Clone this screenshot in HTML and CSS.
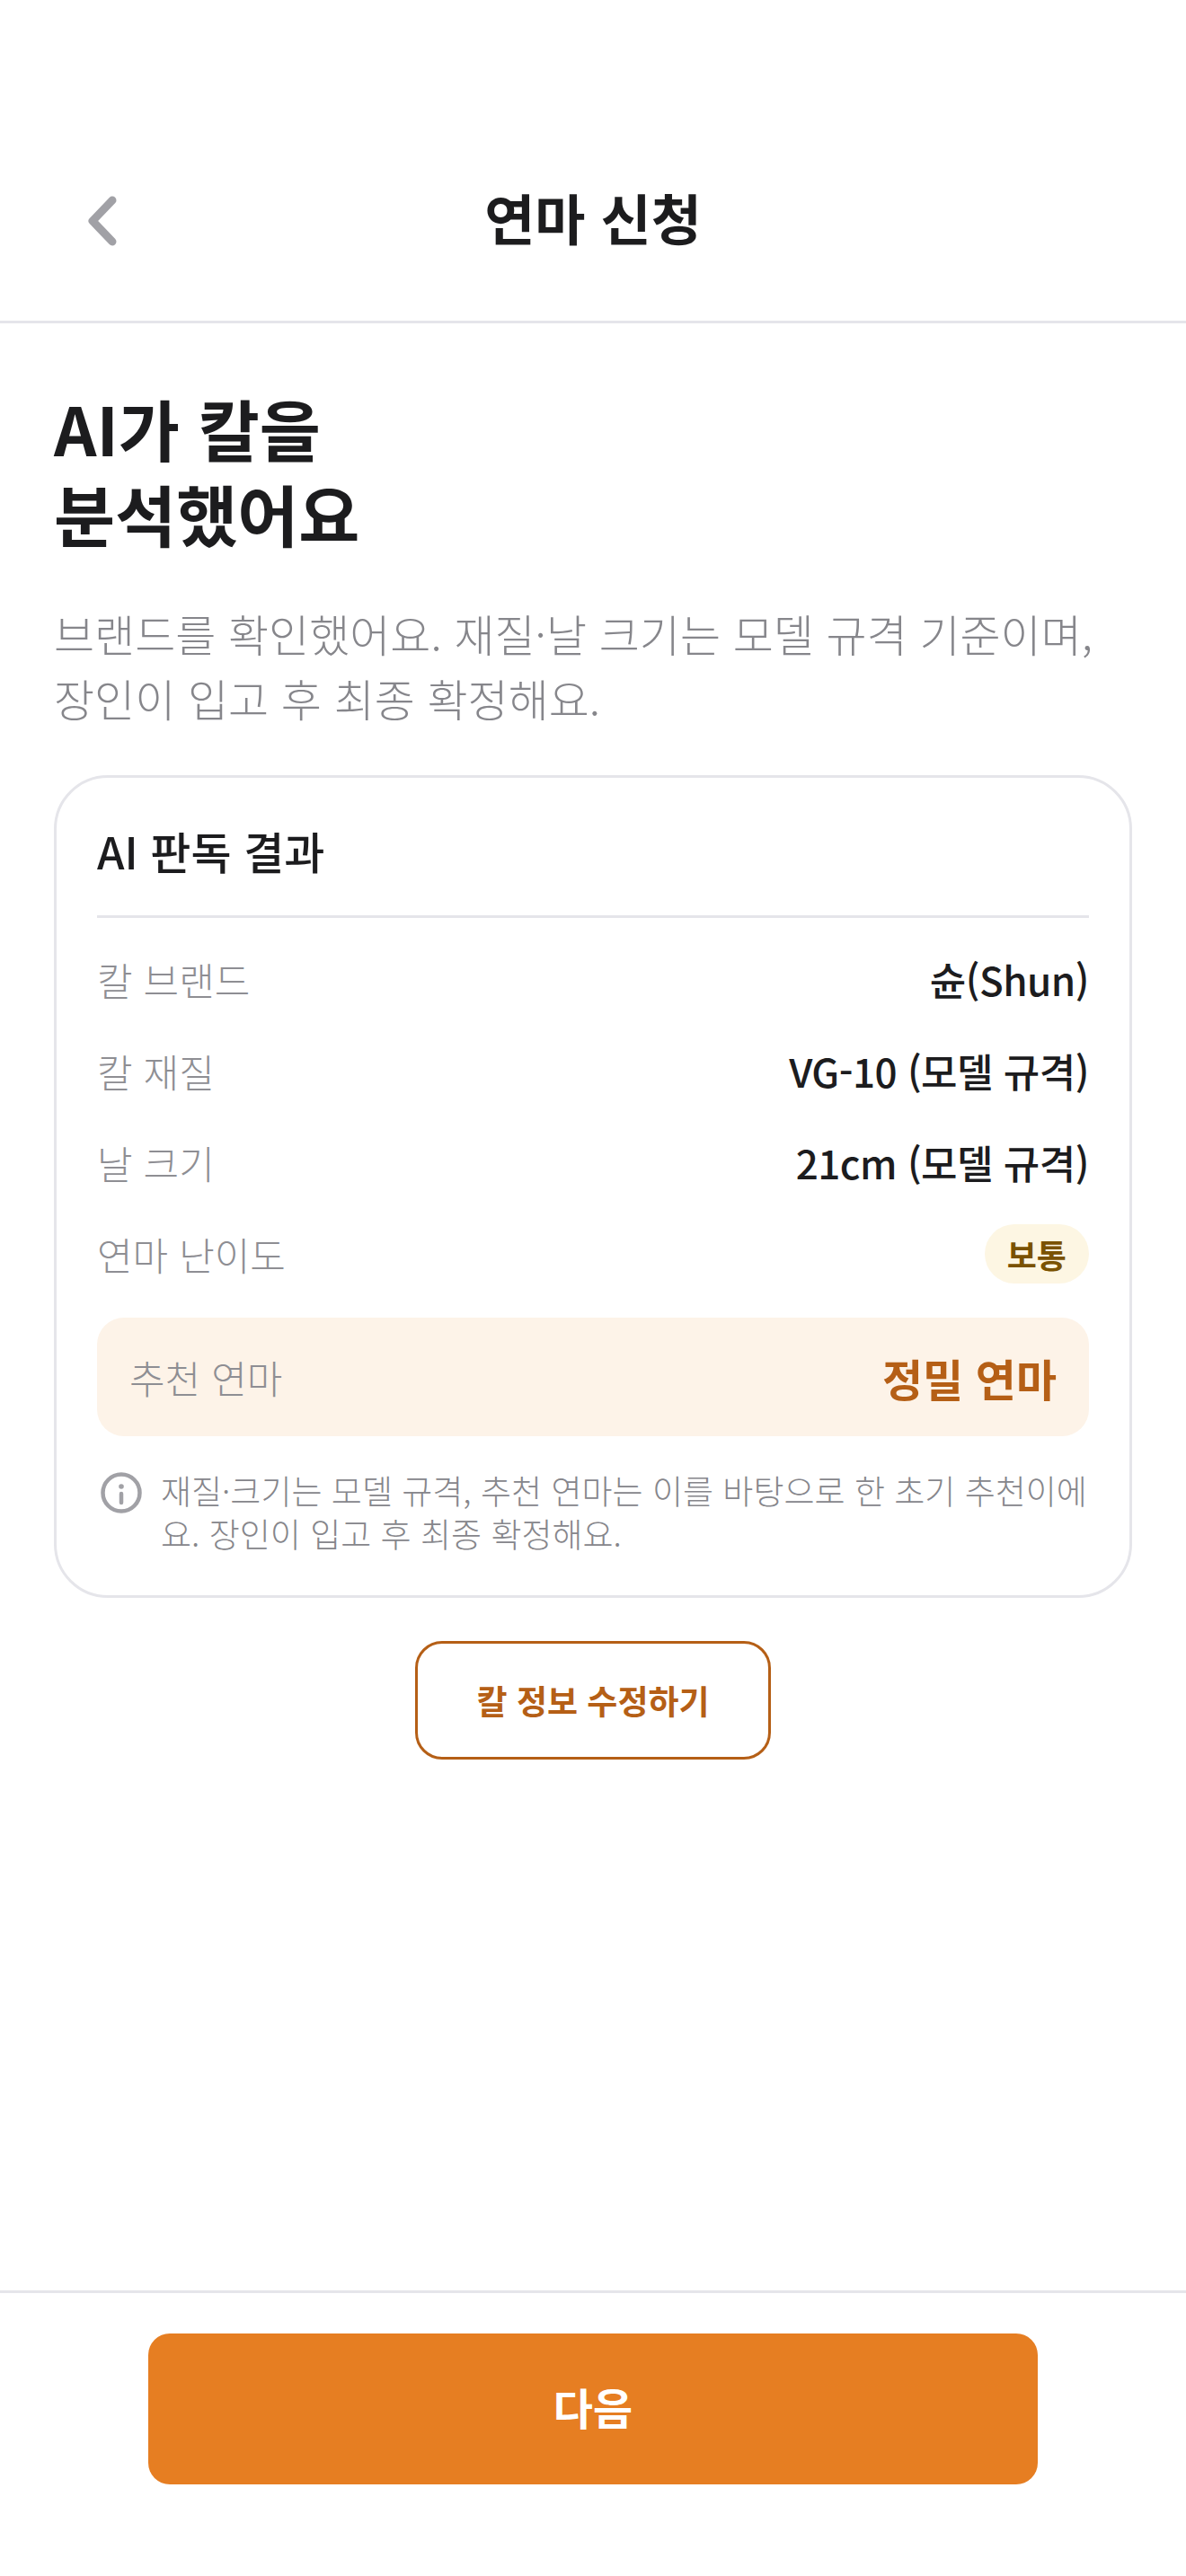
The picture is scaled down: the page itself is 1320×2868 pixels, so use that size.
FILE: index.html
```html
<!DOCTYPE html>
<html lang="ko">
<head>
<meta charset="utf-8">
<title>연마 신청</title>
<link rel="stylesheet" href="styles.css">
</head>
<body>

<div class="screen">
    <header class="topbar">
        <button class="back" aria-label="뒤로">
            <svg width="42" height="60" viewBox="0 0 42 60" fill="none">
                <path d="M35 9 L13 32 L35 55" stroke="#a1a1a6" stroke-width="9" stroke-linecap="round" stroke-linejoin="round"/>
            </svg>
        </button>
        <h2 class="topbar-title">연마 신청</h2>
    </header>

    <main class="content">
        <h1 class="headline">AI가 칼을<br>분석했어요</h1>
        <p class="lead">브랜드를 확인했어요. 재질·날 크기는 모델 규격 기준이며,<br>장인이 입고 후 최종 확정해요.</p>

        <section class="card">
            <h3 class="card-title">AI 판독 결과</h3>

            <div class="rows">
                <div class="row">
                    <span class="row-label">칼 브랜드</span>
                    <span class="row-value">슌(Shun)</span>
                </div>
                <div class="row">
                    <span class="row-label">칼 재질</span>
                    <span class="row-value">VG-10 (모델 규격)</span>
                </div>
                <div class="row">
                    <span class="row-label">날 크기</span>
                    <span class="row-value">21cm (모델 규격)</span>
                </div>
                <div class="row">
                    <span class="row-label">연마 난이도</span>
                    <span class="badge">보통</span>
                </div>
            </div>

            <div class="recommend">
                <span class="recommend-label">추천 연마</span>
                <span class="recommend-value">정밀 연마</span>
            </div>

            <div class="note">
                <svg class="note-icon" width="48" height="48" viewBox="0 0 48 48" fill="none">
                    <circle cx="24" cy="24" r="20.5" stroke="#a1a1a6" stroke-width="4.5"/>
                    <circle cx="24" cy="17" r="2.8" fill="#a1a1a6"/>
                    <path d="M24 25 V35" stroke="#a1a1a6" stroke-width="4.5" stroke-linecap="round"/>
                </svg>
                <p class="note-text">재질·크기는 모델 규격, 추천 연마는 이를 바탕으로 한 초기 추천이에요. 장인이 입고 후 최종 확정해요.</p>
            </div>
        </section>

        <div class="edit-wrap">
            <button class="edit-btn">칼 정보 수정하기</button>
        </div>
    </main>

    <footer class="bottombar">
        <button class="next-btn">다음</button>
    </footer>
</div>

</body>
</html>
```

FILE: styles.css
```css
* {
    box-sizing: border-box;
}

body {
    margin: 0;
    background-color: #fff;
    font-family: "Noto Sans CJK KR", "Noto Sans", sans-serif;
    color: #1c1c1e;
}

button {
    font-family: inherit;
    cursor: pointer;
}

.screen {
    width: 1320px;
    height: 2868px;
    display: flex;
    flex-direction: column;
    overflow: hidden;
}

.topbar {
    height: 360px;
    padding: 130px 90px 0;
    border-bottom: 3px solid #e5e5ea;
    display: flex;
    align-items: center;
}

.back {
    width: 42px;
    height: 60px;
    padding: 0;
    border: 0;
    background: none;
    display: flex;
}

.topbar-title {
    margin: 0;
    flex: 1;
    padding: 0 42px 4px 0;
    text-align: center;
    font-size: 61px;
    font-weight: 700;
    line-height: 80px;
}

.content {
    flex: 1;
    padding: 68px 60px 0;
}

.headline {
    margin: 0;
    font-size: 74px;
    font-weight: 700;
    line-height: 95px;
}

.lead {
    margin: 51px 0 0;
    font-size: 49px;
    font-weight: 300;
    line-height: 72px;
    color: #86868b;
}

.card {
    margin-top: 50px;
    padding: 45px 45px 45px;
    border: 3px solid #e5e5ea;
    border-radius: 60px;
}

.card-title {
    margin: 0;
    padding-bottom: 36px;
    border-bottom: 3px solid #e5e5ea;
    font-size: 49px;
    font-weight: 500;
    line-height: 72px;
}

.rows {
    padding-top: 17px;
    display: flex;
    flex-direction: column;
}

.row {
    height: 102px;
    display: flex;
    align-items: center;
    justify-content: space-between;
}

.row-label {
    font-size: 43px;
    font-weight: 300;
    color: #8e8e93;
}

.row-value {
    font-size: 44px;
    font-weight: 500;
    letter-spacing: -0.5px;
}

.badge {
    padding: 6px 25px;
    border-radius: 40px;
    background-color: #fdf6e3;
    color: #7a5200;
    font-size: 36px;
    font-weight: 700;
    line-height: 54px;
}

.recommend {
    margin-top: 20px;
    height: 132px;
    padding: 0 36px;
    border-radius: 30px;
    background-color: #fdf3e8;
    display: flex;
    align-items: center;
    justify-content: space-between;
}

.recommend-label {
    font-size: 43px;
    font-weight: 300;
    color: #8e8e93;
}

.recommend-value {
    font-size: 49px;
    font-weight: 700;
    color: #b55f16;
}

.note {
    margin-top: 36px;
    padding-left: 3px;
    display: flex;
    gap: 20px;
}

.note-icon {
    flex: none;
    margin-top: 3px;
}

.note-text {
    margin: 0;
    font-size: 37px;
    font-weight: 300;
    line-height: 48px;
    color: #86868b;
}

.edit-wrap {
    margin-top: 48px;
    display: flex;
    justify-content: center;
}

.edit-btn {
    width: 396px;
    height: 132px;
    border: 3px solid #b55f16;
    border-radius: 30px;
    background-color: #fff;
    color: #b55f16;
    font-size: 37px;
    font-weight: 700;
}

.bottombar {
    height: 318px;
    padding-top: 45px;
    border-top: 3px solid #e5e5ea;
    display: flex;
    justify-content: center;
}

.next-btn {
    width: 990px;
    height: 168px;
    padding-bottom: 8px;
    border: 0;
    border-radius: 24px;
    background-color: #e67e22;
    color: #fff;
    font-size: 48px;
    font-weight: 700;
}
```
